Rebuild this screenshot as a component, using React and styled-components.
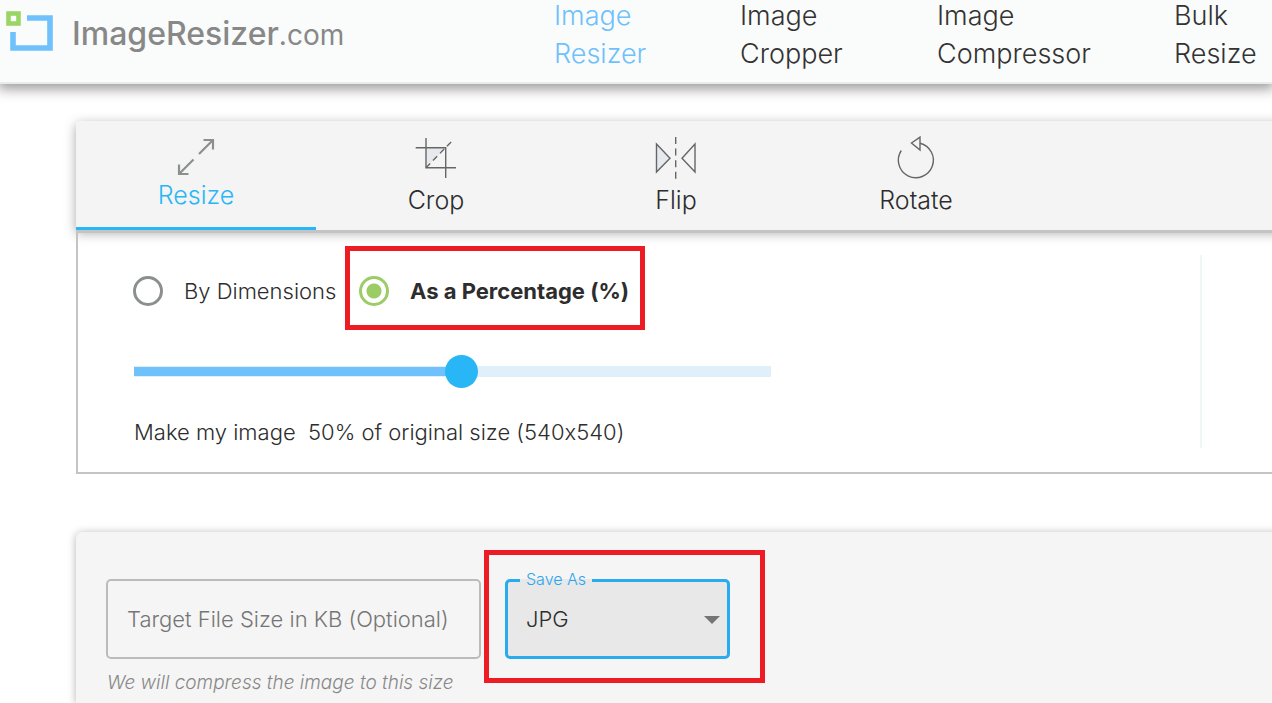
import React, { useState } from "react";
import styled, { createGlobalStyle } from "styled-components";

const GlobalStyle = createGlobalStyle`
  * {
    box-sizing: border-box;
  }
  body {
    margin: 0;
    background: #fff;
    color: #2d2d2d;
    font-family: Inter, "Open Sans", sans-serif;
    font-size: 22px;
    font-weight: 300;
    font-variant-ligatures: no-contextual;
  }
  input,
  select,
  button {
    font: inherit;
    color: inherit;
  }
`;

const Page = styled.div`
  display: flex;
  flex-direction: column;
  min-height: 100vh;
  overflow: hidden;
`;

const Header = styled.header`
  display: grid;
  grid-template-columns: 548fr 718fr;
  align-items: start;
  padding: 0 0 9px 6px;
  background: #fafcfb;
  border-bottom: 2px solid #e9ebea;
  box-shadow: 0 3px 12px 2px rgba(0, 0, 0, 0.4);
`;
const Logo = styled.a`
  display: flex;
  align-items: center;
  gap: 19px;
  padding-top: 11px;
  color: #888;
  font-size: 28px;
  line-height: 46px;
  font-weight: 400;
  text-decoration: none;
  svg {
    overflow: visible;
  }
  strong {
    font-size: 32px;
    font-weight: 500;
  }
`;
const Nav = styled.nav`
  display: grid;
  grid-template-columns: 186fr 197fr 237fr 98fr;
  margin-top: -3px;
`;
const NavLink = styled.a`
  width: min-content;
  color: ${({ $active }) => ($active ? "#6ec1fb" : "#333")};
  font-size: 27px;
  line-height: 38px;
  text-decoration: none;
`;

const Main = styled.main`
  display: flex;
  flex-direction: column;
  flex: 1;
  margin-right: -20px;
  padding: 37px 0 0 76px;
`;
const Tabs = styled.div`
  display: flex;
  height: 109px;
  background: #f4f4f4;
  border-radius: 4px 0 0 0;
  box-shadow: 0 3px 12px rgba(0, 0, 0, 0.35);
`;
const Tab = styled.button`
  display: flex;
  flex-direction: column;
  align-items: center;
  gap: 4px;
  width: 240px;
  padding: 17px 0 0;
  background: none;
  border: none;
  border-bottom: 3px solid ${({ $active }) => ($active ? "#29b6f6" : "transparent")};
  color: ${({ $active }) => ($active ? "#29b6f6" : "#2d2d2d")};
  font-size: 25px;
  line-height: 32px;
  cursor: pointer;
  svg {
    overflow: visible;
  }
`;

const Panel = styled.section`
  position: relative;
  display: flex;
  border: 2px solid #c4c4c4;
  border-top-width: 3px;
  border-right: none;
`;
const PanelContent = styled.div`
  flex: 1;
  padding: 43px 0 24px 55px;
`;
const PanelAside = styled.div`
  width: 92px;
  margin: 22px 0 24px;
  border-left: 2px solid #f1f6f6;
`;
const Options = styled.div`
  display: grid;
  grid-template-columns: 226px max-content;
`;
const Option = styled.label`
  position: relative;
  display: flex;
  align-items: center;
  gap: 21px;
  line-height: 30px;
  font-weight: ${({ $checked }) => ($checked ? 700 : 300)};
  white-space: nowrap;
  cursor: pointer;
`;
const Radio = styled.input`
  appearance: none;
  width: 30px;
  height: 30px;
  margin: 0;
  border: 3px solid #8b908f;
  border-radius: 50%;
  &:checked {
    border-color: #9ccc65;
    background: radial-gradient(circle, #9ccc65 7px, transparent 8px);
  }
`;
const Highlight = styled.span`
  position: absolute;
  inset: ${({ $inset }) => $inset};
  border: 5px solid #ed1c24;
  pointer-events: none;
`;

const Slider = styled.input`
  appearance: none;
  display: block;
  width: 637px;
  max-width: 100%;
  height: 33px;
  margin: 49px 0 28px 1px;
  background: linear-gradient(#6ec1fb, #6ec1fb) left / 51% 9px no-repeat,
    linear-gradient(#dff0fb, #dff0fb) center / 100% 11px no-repeat;
  &::-webkit-slider-thumb {
    appearance: none;
    width: 33px;
    height: 33px;
    border-radius: 50%;
    background: #29b6f6;
  }
`;
const SizeText = styled.p`
  margin: 0 1px;
  line-height: 32px;
  white-space: pre-wrap;
`;

const OutputCard = styled.section`
  display: flex;
  flex: 1;
  align-items: flex-start;
  gap: 24px;
  margin-top: 58px;
  padding: 47px 30px 8px;
  background: #f5f5f5;
  border-radius: 6px 0 0 0;
  box-shadow: 0 1px 8px rgba(0, 0, 0, 0.3);
`;
const Field = styled.div`
  position: relative;
  width: ${({ $width }) => $width};
`;
const TextInput = styled.input`
  display: block;
  width: 100%;
  height: 80px;
  padding: 0 19px;
  background: transparent;
  border: 2px solid #bbb;
  border-radius: 5px;
  outline: none;
  &::placeholder {
    color: #757575;
    opacity: 1;
  }
`;
const Hint = styled.p`
  margin: 12px 1px 0;
  color: #888;
  font-size: 19px;
  font-style: italic;
  line-height: 24px;
  white-space: nowrap;
`;
const Select = styled.select`
  appearance: none;
  display: block;
  width: 100%;
  height: 80px;
  padding: 0 18px;
  background: #e8e8e8;
  border: 3px solid #29abed;
  border-radius: 5px;
  outline: none;
`;
const SelectLabel = styled.label`
  position: absolute;
  top: -12px;
  left: 15px;
  padding: 0 6px;
  background: linear-gradient(#f5f5f5 12px, #e8e8e8 12px);
  color: #29a5f0;
  font-size: 16px;
  line-height: 24px;
`;
const Caret = styled.span`
  position: absolute;
  top: 37px;
  right: 10px;
  border: 8px solid transparent;
  border-top-color: #757575;
  border-bottom: none;
  pointer-events: none;
`;

const LogoIcon = () => (
  <svg width="47" height="46" viewBox="6 12 47 46" fill="none">
    <rect x="8.5" y="13.5" width="10" height="10" fill="#fff" stroke="#9bd566" strokeWidth="4.6" />
    <path d="M27 18H50V48H13V32" stroke="#6ec1fb" strokeWidth="5.6" />
  </svg>
);

const ResizeIcon = () => (
  <svg width="36" height="37" fill="none" stroke="#8b908f" strokeWidth="2.2">
    <path d="M21 16L35 2M25.500 2H35V11.500M15.500 21.500L1 36M1 26.500V36H10.500" />
  </svg>
);

const CropIcon = () => (
  <svg width="42" height="42" fill="none" stroke="#666" strokeWidth="1.400">
    <path d="M11 9.700H30.700L11 29.700Z" fill="#e6eaee" stroke="none" />
    <path d="M11 0V29.700H41M.7 9.700H30.700V40" />
    <path d="M11 29.700L37 3" strokeDasharray="6 4" />
  </svg>
);

const FlipIcon = () => (
  <svg width="42" height="42" fill="none" stroke="#666" strokeWidth="1.400">
    <path d="M1.500 6L15 20.200L1.500 34Z" fill="#e6eaee" />
    <path d="M40 6L27 20.200L40 34Z" />
    <path d="M20.700 -1V41" strokeDasharray="7 4.600" />
  </svg>
);

const RotateIcon = () => (
  <svg width="42" height="42" fill="none" stroke="#666" strokeWidth="1.400">
    <path d="M25 5.200A17.500 17.500 0 1 1 6.300 12.500" />
    <path d="M16.500 5L25 -.8V12Z" />
  </svg>
);

const navItems = ["Image Resizer", "Image Cropper", "Image Compressor", "Bulk Resize"];

const tabs = [
  { name: "Resize", Icon: ResizeIcon },
  { name: "Crop", Icon: CropIcon },
  { name: "Flip", Icon: FlipIcon },
  { name: "Rotate", Icon: RotateIcon },
];

const IMAGE_SIZE = 1080;
const MAX_PERCENT = 97;

const App = () => {
  const [tab, setTab] = useState("Resize");
  const [mode, setMode] = useState("percentage");
  const [percent, setPercent] = useState(50);
  const [format, setFormat] = useState("JPG");
  const size = Math.round((IMAGE_SIZE * percent) / 100);

  return (
    <Page>
      <GlobalStyle />
      <Header>
        <Logo href="#">
          <LogoIcon />
          <span>
            <strong>ImageResizer</strong>.com
          </span>
        </Logo>
        <Nav>
          {navItems.map((item, index) => (
            <NavLink key={item} href="#" $active={index === 0}>
              {item}
            </NavLink>
          ))}
        </Nav>
      </Header>
      <Main>
        <Tabs>
          {tabs.map(({ name, Icon }) => (
            <Tab key={name} type="button" $active={tab === name} onClick={() => setTab(name)}>
              <Icon />
              {name}
            </Tab>
          ))}
        </Tabs>
        <Panel>
          <PanelContent>
            <Options>
              <Option $checked={mode === "dimensions"}>
                <Radio
                  type="radio"
                  name="mode"
                  checked={mode === "dimensions"}
                  onChange={() => setMode("dimensions")}
                />
                By Dimensions
              </Option>
              <Option $checked={mode === "percentage"}>
                <Radio
                  type="radio"
                  name="mode"
                  checked={mode === "percentage"}
                  onChange={() => setMode("percentage")}
                />
                As a Percentage (%)
                <Highlight $inset="-30px -16px -24px -14px" />
              </Option>
            </Options>
            <Slider
              type="range"
              min="0"
              max={MAX_PERCENT}
              value={percent}
              aria-labelledby="size-text"
              style={{ backgroundSize: `${(percent / MAX_PERCENT) * 100}% 9px, 100% 11px` }}
              onChange={(e) => setPercent(Number(e.target.value))}
            />
            <SizeText id="size-text">
              {`Make my image  ${percent}% of original size (${size}x${size})`}
            </SizeText>
          </PanelContent>
          <PanelAside />
        </Panel>
        <OutputCard>
          <Field $width="375px">
            <TextInput
              type="text"
              aria-label="Target File Size in KB (Optional)"
              placeholder="Target File Size in KB (Optional)"
            />
            <Hint>We will compress the image to this size</Hint>
          </Field>
          <Field $width="225px">
            <Select id="format" value={format} onChange={(e) => setFormat(e.target.value)}>
              <option>JPG</option>
            </Select>
            <SelectLabel htmlFor="format">Save As</SelectLabel>
            <Caret />
            <Highlight $inset="-29px -35px -24px -21px" />
          </Field>
        </OutputCard>
      </Main>
    </Page>
  );
};

export default App;
